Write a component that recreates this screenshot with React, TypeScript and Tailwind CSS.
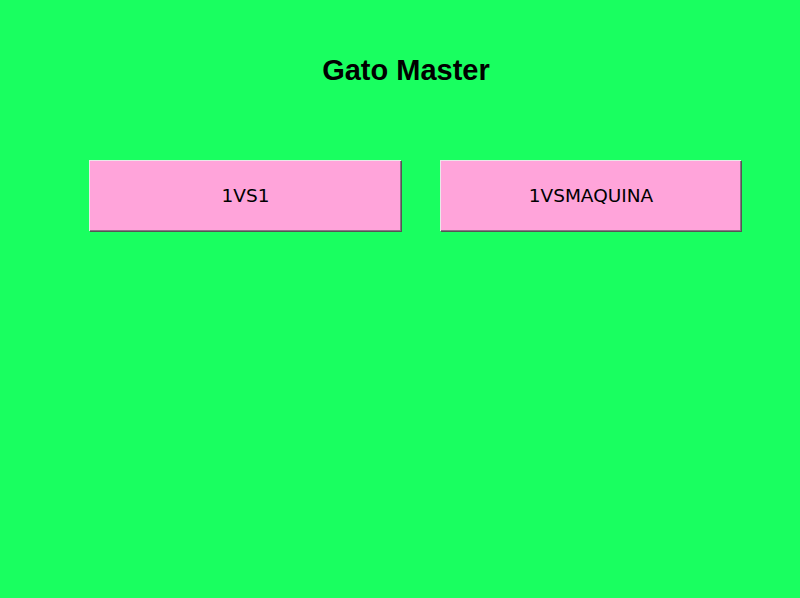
import React from "react";

function Btn({ label, w }: { label: string; w: string }) {
  return (
    <button
      className={`${w} h-[71px] bg-[#ffa4da] border-t border-l border-t-[#e8e8e8] border-l-[#e8e8e8] shadow-[inset_-1px_-1px_0_#8c6f86,1px_1px_0_#555] text-black text-[18.5px] font-['DejaVu_Sans',sans-serif] flex items-center justify-center`}
    >
      {label}
    </button>
  );
}

export default function App() {
  return (
    <div className="w-[800px] h-[598px] bg-[#19ff60] flex flex-col">
      <h1 className="mt-[53px] pl-[12px] text-center text-[29px] leading-[34px] font-bold text-black font-['Liberation_Sans',Arial,sans-serif]">
        Gato Master
      </h1>
      <div className="mt-[73px] pl-[89px] flex gap-[39px]">
        <Btn label="1VS1" w="w-[312px]" />
        <Btn label="1VSMAQUINA" w="w-[301px]" />
      </div>
    </div>
  );
}
